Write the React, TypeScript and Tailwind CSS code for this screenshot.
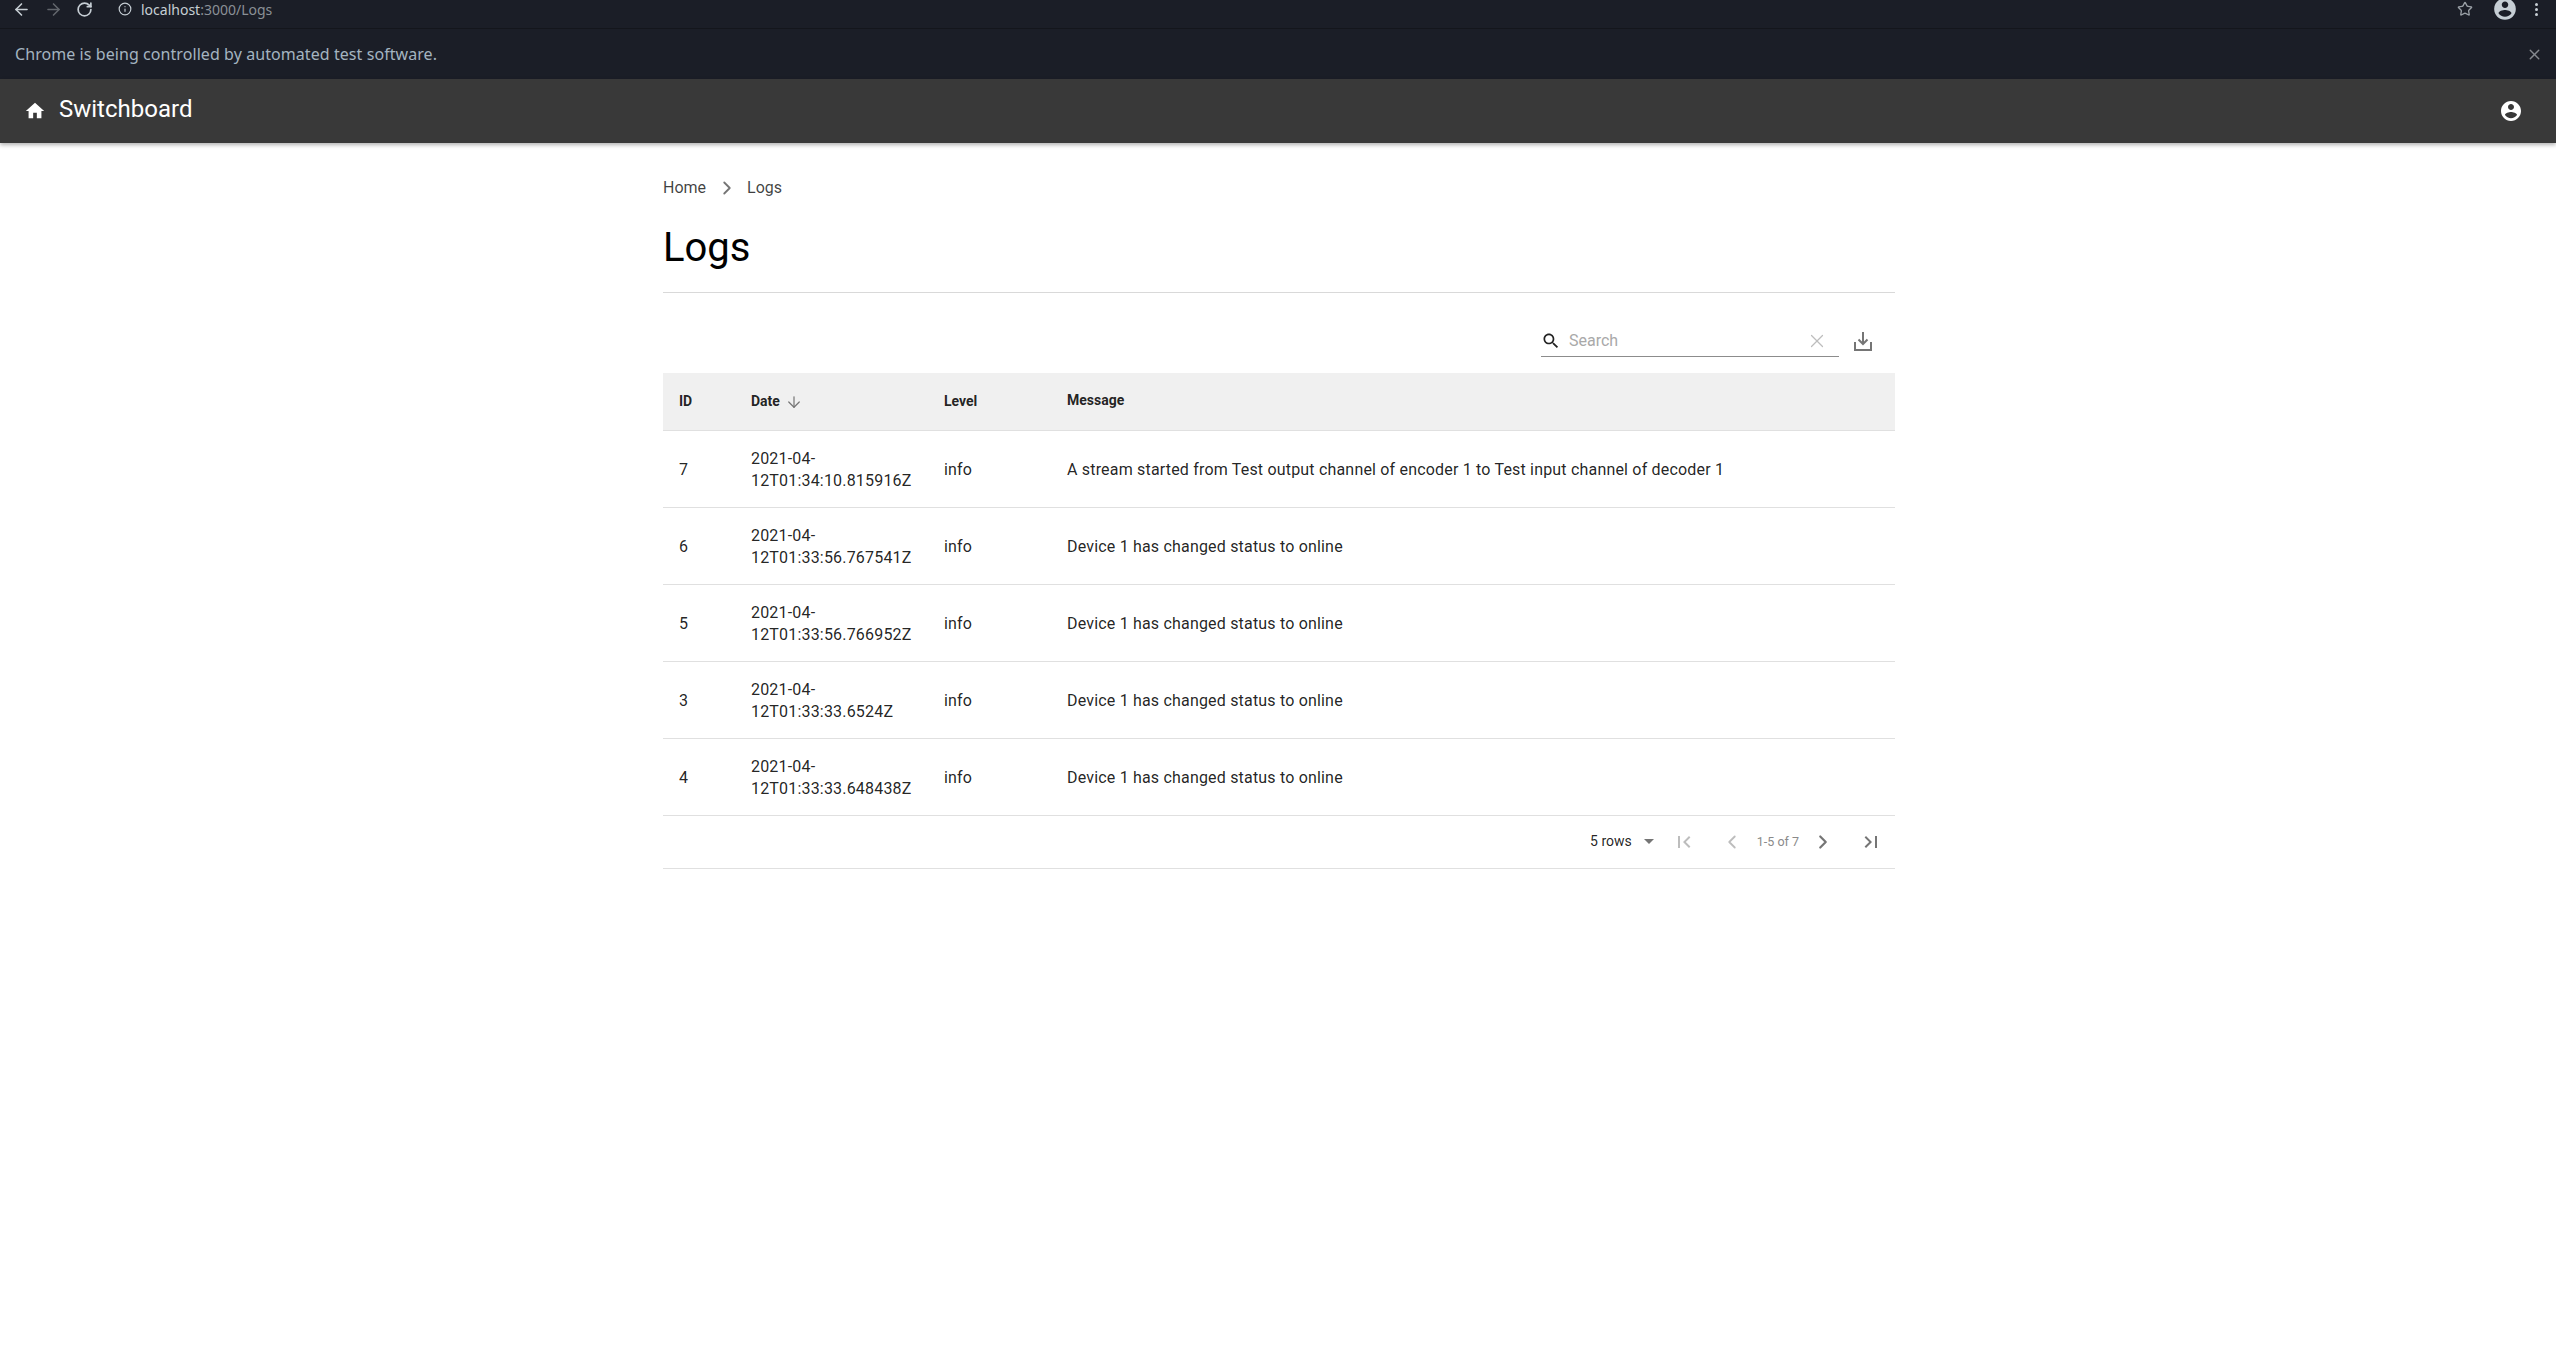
import React from 'react';
import { ArrowLeft, ArrowRight, RotateCw, Info, Star, X, ArrowDown, ChevronRight, ChevronLeft } from 'lucide-react';

const rows = [
  { id: 7, date: ['2021-04-', '12T01:34:10.815916Z'], message: 'A stream started from Test output channel of encoder 1 to Test input channel of decoder 1' },
  { id: 6, date: ['2021-04-', '12T01:33:56.767541Z'], message: 'Device 1 has changed status to online' },
  { id: 5, date: ['2021-04-', '12T01:33:56.766952Z'], message: 'Device 1 has changed status to online' },
  { id: 3, date: ['2021-04-', '12T01:33:33.6524Z'], message: 'Device 1 has changed status to online' },
  { id: 4, date: ['2021-04-', '12T01:33:33.648438Z'], message: 'Device 1 has changed status to online' },
];

function AccountIcon({ className }: { className: string }) {
  return (
    <svg viewBox="0 0 24 24" fill="currentColor" className={className}>
      <path d="M12 2C6.48 2 2 6.48 2 12s4.48 10 10 10 10-4.48 10-10S17.52 2 12 2zm0 3c1.66 0 3 1.34 3 3s-1.34 3-3 3-3-1.34-3-3 1.34-3 3-3zm0 14.2c-2.5 0-4.71-1.28-6-3.22.03-1.99 4-3.08 6-3.08 1.99 0 5.97 1.09 6 3.08-1.29 1.94-3.5 3.22-6 3.22z" />
    </svg>
  );
}

function PageEdge({ className, flip }: { className: string; flip?: boolean }) {
  return (
    <svg viewBox="0 0 24 24" fill="currentColor" className={className}>
      <path d={flip ? 'M5.59 7.41 10.18 12l-4.59 4.59L7 18l6-6-6-6zM16 6h2v12h-2z' : 'M18.41 16.59 13.82 12l4.59-4.59L17 6l-6 6 6 6zM6 6h2v12H6z'} />
    </svg>
  );
}

function BrowserChrome() {
  return (
    <div className="bg-[#1b1e27] font-['Noto_Sans',sans-serif]">
      <div className="flex h-[29px] items-center overflow-hidden border-b border-[#14161c] pb-[10px] pl-[12px] pr-[18px]">
        <ArrowLeft className="h-[19px] w-[19px] text-[#c6ced4]" strokeWidth={2} />
        <ArrowRight className="ml-[13px] h-[19px] w-[19px] text-[#62666c]" strokeWidth={2} />
        <RotateCw className="ml-[13px] h-[17px] w-[17px] text-[#c6ced4]" strokeWidth={2.4} />
        <Info className="ml-[25px] h-[14px] w-[14px] text-[#c6ced4]" />
        <span className="ml-[9px] text-[14px] text-[#c6ced4]">
          localhost<span className="text-[#8a9096]">:3000/Logs</span>
        </span>
        <Star className="ml-auto h-[16px] w-[16px] text-[#9aa0a6]" />
        <AccountIcon className="ml-[19px] h-[26px] w-[26px] shrink-0 text-[#c6ced4]" />
        <div className="ml-[17px] flex flex-col gap-[2px]">
          <span className="h-[3px] w-[3px] rounded-full bg-[#c6ced4]" />
          <span className="h-[3px] w-[3px] rounded-full bg-[#c6ced4]" />
          <span className="h-[3px] w-[3px] rounded-full bg-[#c6ced4]" />
        </div>
      </div>
      <div className="flex h-[50px] items-center justify-between pl-[15px] pr-[13px]">
        <span className="text-[16px] tracking-[0.07px] text-[#a4b4c0]">Chrome is being controlled by automated test software.</span>
        <X className="h-[17px] w-[17px] text-[#85898f]" strokeWidth={2} />
      </div>
    </div>
  );
}

function AppBar() {
  return (
    <div className="relative flex h-[64px] items-center bg-[#393939] pl-[24px] pr-[33px] text-white shadow-[0_2px_4px_rgba(0,0,0,0.3)]">
      <svg viewBox="0 0 24 24" fill="currentColor" className="h-[22px] w-[22px]">
        <path d="M10 20v-6h4v6h5v-8h3L12 3 2 12h3v8z" />
      </svg>
      <span className="ml-[13px] pb-[4px] text-[24px]">Switchboard</span>
      <AccountIcon className="ml-auto h-[24px] w-[24px]" />
    </div>
  );
}

function LogsTable() {
  return (
    <div className="border-b border-[#e0e0e0] text-[rgba(0,0,0,0.87)]">
      <div className="flex h-[80px] items-end justify-end pb-[16px] pr-[20px]">
        <div className="flex h-[32px] w-[298px] items-center border-b border-[#8c8c8c] pr-[11px]">
          <svg viewBox="0 0 24 24" fill="currentColor" className="h-[20px] w-[20px] text-[#222]">
            <path d="M15.5 14h-.79l-.28-.27C15.41 12.59 16 11.11 16 9.5 16 5.91 13.09 3 9.5 3S3 5.91 3 9.5 5.91 16 9.5 16c1.61 0 3.09-.59 4.23-1.57l.27.28v.79l5 4.99L20.49 19l-4.99-5zm-6 0C7.01 14 5 11.99 5 9.5S7.01 5 9.5 5 14 7.01 14 9.5 11.99 14 9.5 14z" />
          </svg>
          <span className="ml-[8px] text-[16px] text-[#a9a9a9]">Search</span>
          <X className="ml-auto h-[22px] w-[22px] text-[#bdbdbd]" strokeWidth={1.3} />
        </div>
        <svg viewBox="0 0 24 24" fill="none" stroke="currentColor" strokeWidth="2" className="mb-[4px] ml-[12px] h-[24px] w-[24px] text-[#757575]">
          <path d="M12 3v12M7.5 10.5 12 15l4.5-4.5M4 13v8h16v-8" />
        </svg>
      </div>
      <table className="w-full table-fixed border-collapse text-[16px] tracking-[0.185px]">
        <colgroup>
          <col className="w-[72px]" />
          <col className="w-[193px]" />
          <col className="w-[123px]" />
          <col />
        </colgroup>
        <thead>
          <tr className="h-[57px] border-b border-[#e0e0e0] bg-[#f0f0f0] text-left text-[14px] tracking-normal">
            <th className="pl-[16px] pt-[1px] font-bold">ID</th>
            <th className="pl-[16px] pt-[1px] font-bold">
              <span className="inline-flex items-center">
                Date
                <ArrowDown className="ml-[5px] h-[18px] w-[18px] text-[#757575]" strokeWidth={1.6} />
              </span>
            </th>
            <th className="pl-[16px] pt-[1px] font-bold">Level</th>
            <th className="pb-[1px] pl-[16px] font-bold">Message</th>
          </tr>
        </thead>
        <tbody>
          {rows.map((row) => (
            <tr key={row.id} className="h-[77px] border-b border-[#e0e0e0]">
              <td className="pl-[16px] pt-[2px]">{row.id}</td>
              <td className="pl-[16px] pt-[2px] leading-[22px]">
                {row.date[0]}
                <br />
                {row.date[1]}
              </td>
              <td className="pl-[16px] pt-[2px]">info</td>
              <td className="pl-[16px] pt-[2px]">{row.message}</td>
            </tr>
          ))}
        </tbody>
      </table>
      <div className="flex h-[52px] items-center justify-end pr-[12px]">
        <span className="pb-[1px] text-[14px]">5 rows</span>
        <svg viewBox="0 0 10 5" fill="currentColor" className="ml-[12px] h-[5px] w-[10px] text-[#757575]">
          <path d="M0 0h10L5 5z" />
        </svg>
        <PageEdge className="ml-[18px] h-[24px] w-[24px] text-[#bdbdbd]" />
        <ChevronLeft className="ml-[25px] h-[22px] w-[22px] text-[#bdbdbd]" strokeWidth={2} />
        <span className="ml-[14px] pt-[2px] text-[12.5px] text-[#8a8a8a]">1-5 of 7</span>
        <ChevronRight className="ml-[13px] h-[22px] w-[22px] text-[#757575]" strokeWidth={2.4} />
        <PageEdge flip className="ml-[25px] h-[24px] w-[24px] text-[#757575]" />
      </div>
    </div>
  );
}

export default function App() {
  return (
    <div className="min-h-[1361px] bg-white font-['Roboto',sans-serif]">
      <BrowserChrome />
      <AppBar />
      <main className="ml-[663px] w-[1232px]">
        <nav className="mt-[33px] flex h-[24px] items-center text-[16px] text-[rgba(0,0,0,0.75)]">
          <span>Home</span>
          <ChevronRight className="ml-[10px] h-[22px] w-[22px] text-[#757575]" strokeWidth={2} />
          <span className="ml-[9px]">Logs</span>
        </nav>
        <h1 className="mt-[24px] h-[69px] border-b border-[#d9d9d9] text-[40px] leading-[48px] text-black">Logs</h1>
        <LogsTable />
      </main>
    </div>
  );
}
